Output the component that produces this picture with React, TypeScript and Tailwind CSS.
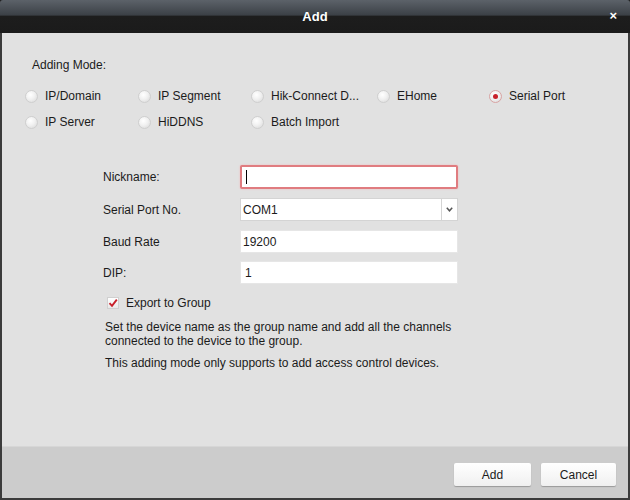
import { useState } from "react";

const modes: ReadonlyArray<{ label: string; width: string }> = [
  { label: "IP/Domain", width: "w-[113px]" },
  { label: "IP Segment", width: "w-[113px]" },
  { label: "Hik-Connect Domain", width: "w-[126px]" },
  { label: "EHome", width: "w-[112px]" },
  { label: "Serial Port", width: "w-[112px]" },
  { label: "IP Server", width: "w-[113px]" },
  { label: "HiDDNS", width: "w-[113px]" },
  { label: "Batch Import", width: "w-[126px]" },
];

function Radio({ checked }: { checked: boolean }) {
  return (
    <span
      className={`flex h-[13px] w-[13px] shrink-0 items-center justify-center rounded-full border bg-[radial-gradient(circle_at_40%_35%,#ffffff_0%,#f1f1f1_45%,#d6d6d6_100%)] ${
        checked ? "border-[#d9a3a3]" : "border-[#cfcfcf]"
      }`}
    >
      {checked && <span className="h-[5px] w-[5px] rounded-full bg-[#c8202a]" />}
    </span>
  );
}

function Field({ label, children }: { label: string; children: React.ReactNode }) {
  return (
    <div className="flex h-[23px] items-center">
      <span className="w-[137px] shrink-0">{label}</span>
      {children}
    </div>
  );
}

export default function App() {
  const [mode, setMode] = useState("Serial Port");
  const [exportGroup, setExportGroup] = useState(true);

  return (
    <div
      className="flex h-[500px] w-[630px] flex-col bg-[#1c1c1c] text-[12px] text-[#1b1b1b]"
      style={{ fontFamily: '"Liberation Sans", Arial, sans-serif' }}
    >
      {/* title bar */}
      <div className="relative flex h-[33px] shrink-0 items-center justify-center rounded-t-[3px] bg-[linear-gradient(to_bottom,#5c6269_0%,#3c4147_45%,#1d1d1d_50%,#1b1b1b_100%)]">
        <span className="text-[13px] font-bold text-white">Add</span>
        <span className="absolute right-[13px] top-[9px] text-[13px] font-bold leading-none text-white">×</span>
      </div>

      {/* body */}
      <div className="flex flex-1 flex-col border-x-2 border-[#3b3b3b] bg-[#e1e1e1] pt-[25px]">
        <div className="pl-[30px] leading-[14px]">Adding Mode:</div>

        <div className="mt-[11px] flex w-[600px] flex-wrap pl-[23px]">
          {modes.map((m) => (
            <button
              key={m.label}
              type="button"
              onClick={() => setMode(m.label)}
              className={`flex h-[26px] items-center gap-[7px] ${m.width}`}
            >
              <Radio checked={mode === m.label} />
              <span className="truncate pr-[12px] text-left">
                {m.label === "Hik-Connect Domain" ? "Hik-Connect D..." : m.label}
              </span>
            </button>
          ))}
        </div>

        <div className="mt-[30px] flex flex-col pl-[101px]">
          <Field label="Nickname:">
            <div className="flex h-[24px] w-[218px] items-center rounded-[2px] border-2 border-[#e07c80] bg-white pl-[4px] shadow-[0_0_2px_#f3b5b7]">
              <span className="h-[14px] w-px bg-black" />
            </div>
          </Field>
          <div className="mt-[10px]">
            <Field label="Serial Port No.">
              <div className="flex h-[23px] w-[218px] items-center border border-[#d4d4d4] bg-white">
                <span className="flex-1 pl-[2px]">COM1</span>
                <span className="flex h-full w-[16px] items-center justify-center border-l border-[#d4d4d4]">
                  <svg width="7" height="5" viewBox="0 0 7 5">
                    <path d="M0.8 0.8 L3.5 3.8 L6.2 0.8" fill="none" stroke="#555" strokeWidth="1.5" />
                  </svg>
                </span>
              </div>
            </Field>
          </div>
          <div className="mt-[9px]">
            <Field label="Baud Rate">
              <div className="flex h-[23px] w-[218px] items-center border border-[#e6e6e6] bg-white pl-[2px]">19200</div>
            </Field>
          </div>
          <div className="mt-[8px]">
            <Field label="DIP:">
              <div className="flex h-[23px] w-[218px] items-center border border-[#e6e6e6] bg-white pl-[4px]">1</div>
            </Field>
          </div>
        </div>

        <div className="mt-[10px] flex items-center gap-[7px] pl-[105px]">
          <button
            type="button"
            onClick={() => setExportGroup((v) => !v)}
            className="flex h-[12px] w-[12px] items-center justify-center border border-[#d0d0d0] bg-[linear-gradient(to_bottom,#ffffff,#e9e9e9)]"
          >
            {exportGroup && (
              <svg width="10" height="10" viewBox="0 0 10 10">
                <path d="M1.5 5.2 L4 7.8 L8.8 1.6" fill="none" stroke="#c8202a" strokeWidth="1.9" />
              </svg>
            )}
          </button>
          <span>Export to Group</span>
        </div>

        <div className="mt-[8px] pl-[103px] leading-[14px]">
          <p>Set the device name as the group name and add all the channels</p>
          <p>connected to the device to the group.</p>
          <p className="mt-[8px]">This adding mode only supports to add access control devices.</p>
        </div>

        <div className="mt-auto flex h-[52px] justify-end gap-[10px] border-t border-[#d6d6d6] bg-[#cccccc] pr-[12px] pt-[16px]">
          <button
            type="button"
            className="h-[23px] w-[77px] rounded-[2px] bg-[linear-gradient(to_bottom,#ffffff,#f0f0f0)] shadow-[0_1px_1px_#9a9a9a]"
          >
            Add
          </button>
          <button
            type="button"
            className="h-[23px] w-[75px] rounded-[2px] bg-[linear-gradient(to_bottom,#ffffff,#f0f0f0)] shadow-[0_1px_1px_#9a9a9a]"
          >
            Cancel
          </button>
        </div>
      </div>
      <div className="h-[2px] shrink-0 bg-[#3b3b3b]" />
    </div>
  );
}
